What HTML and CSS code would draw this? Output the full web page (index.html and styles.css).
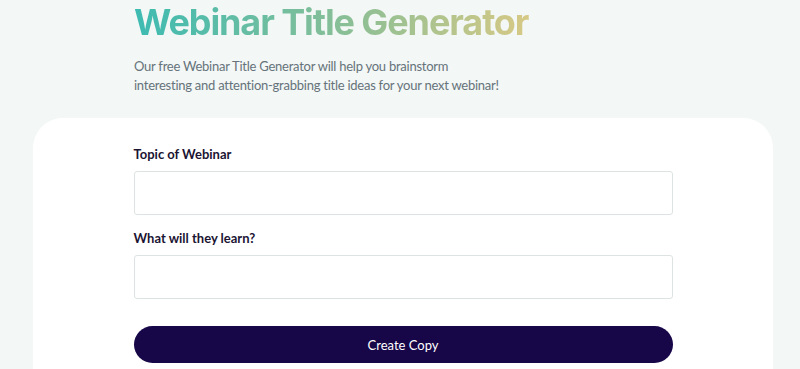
FILE: index.html
```html
<!DOCTYPE html>
<html lang="en">
<head>
  <meta charset="UTF-8">
  <title>Webinar Title Generator</title>
  <link rel="stylesheet" href="styles.css">
</head>
<body>
<div class="hero">
  <h1 class="title">Webinar Title Generator</h1>
  <p class="intro">Our free Webinar Title Generator will help you brainstorm<br>interesting and attention-grabbing title ideas for your next webinar!</p>
</div>
<div class="card">
  <form class="form">
    <label class="label" for="topic">Topic of Webinar</label>
    <input class="field" id="topic" type="text">
    <label class="label" for="learn">What will they learn?</label>
    <input class="field" id="learn" type="text">
    <button class="submit" type="button">Create Copy</button>
  </form>
</div>
</body>
</html>
```

FILE: styles.css
```css
*{
  margin: 0;
  padding: 0;
  box-sizing: border-box;
}
body{
  background-color: #f3f7f6;
  font-family: "Lato", "Liberation Sans", sans-serif;
  overflow: hidden;
}
.hero{
  padding: 0 0 0 134px;
  height: 118px;
}
.title{
  display: inline-block;
  font-family: "Inter", "Liberation Sans", sans-serif;
  font-size: 36px;
  font-weight: 700;
  line-height: 44px;
  letter-spacing: -1.1px;
  padding-right: 4px;
  background: linear-gradient(90deg, #3dbbb2 0%, #8cbf95 55%, #d8c985 100%);
  -webkit-background-clip: text;
  background-clip: text;
  color: transparent;
}
.intro{
  margin-top: 13px;
  font-size: 13px;
  line-height: 19px;
  letter-spacing: -0.25px;
  color: #66737a;
}
.card{
  margin: 0 27px 0 33px;
  height: 260px;
  background-color: #fff;
  border-radius: 30px 30px 0 0;
  padding-top: 28px;
}
.form{
  width: 539px;
  margin: 0 auto;
  display: flex;
  flex-direction: column;
}
.label{
  font-size: 13px;
  font-weight: 700;
  line-height: 17px;
  color: #1b1433;
  margin-bottom: 8px;
}
.field{
  height: 44px;
  border: 1px solid #dde3e3;
  border-radius: 3px;
  background: #fff;
  margin-bottom: 15px;
}
.submit{
  margin-top: 12px;
  height: 37px;
  border: none;
  border-radius: 19px;
  background-color: #170648;
  color: #fff;
  font-family: "Lato", "Liberation Sans", sans-serif;
  font-size: 13px;
}
```
